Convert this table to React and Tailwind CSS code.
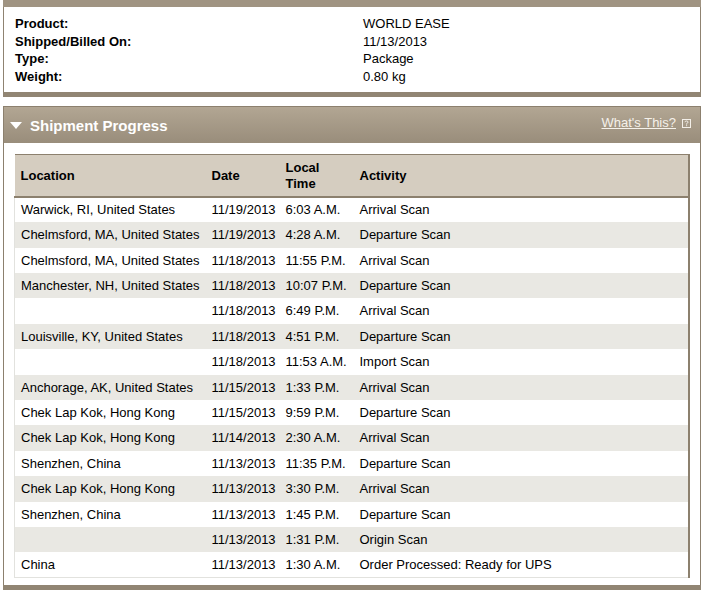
const rows = [
  ["Warwick, RI, United States", "11/19/2013", "6:03 A.M.", "Arrival Scan"],
  ["Chelmsford, MA, United States", "11/19/2013", "4:28 A.M.", "Departure Scan"],
  ["Chelmsford, MA, United States", "11/18/2013", "11:55 P.M.", "Arrival Scan"],
  ["Manchester, NH, United States", "11/18/2013", "10:07 P.M.", "Departure Scan"],
  ["", "11/18/2013", "6:49 P.M.", "Arrival Scan"],
  ["Louisville, KY, United States", "11/18/2013", "4:51 P.M.", "Departure Scan"],
  ["", "11/18/2013", "11:53 A.M.", "Import Scan"],
  ["Anchorage, AK, United States", "11/15/2013", "1:33 P.M.", "Arrival Scan"],
  ["Chek Lap Kok, Hong Kong", "11/15/2013", "9:59 P.M.", "Departure Scan"],
  ["Chek Lap Kok, Hong Kong", "11/14/2013", "2:30 A.M.", "Arrival Scan"],
  ["Shenzhen, China", "11/13/2013", "11:35 P.M.", "Departure Scan"],
  ["Chek Lap Kok, Hong Kong", "11/13/2013", "3:30 P.M.", "Arrival Scan"],
  ["Shenzhen, China", "11/13/2013", "1:45 P.M.", "Departure Scan"],
  ["", "11/13/2013", "1:31 P.M.", "Origin Scan"],
  ["China", "11/13/2013", "1:30 A.M.", "Order Processed: Ready for UPS"],
];

const details = [
  ["Product:", "WORLD EASE"],
  ["Shipped/Billed On:", "11/13/2013"],
  ["Type:", "Package"],
  ["Weight:", "0.80 kg"],
];

function HelpIcon() {
  return (
    <svg width="9" height="9" viewBox="0 0 9 9" className="ml-[6px] mt-[2px]">
      <rect x="0.5" y="0.5" width="8" height="8" fill="none" stroke="#f3efe8" />
      <path d="M3 3.2 Q3 2 4.5 2 Q6 2 6 3.2 Q6 4 4.6 4.6 L4.6 5.6" fill="none" stroke="#f3efe8" strokeWidth="1" />
      <rect x="4.1" y="6.2" width="1" height="1" fill="#f3efe8" />
    </svg>
  );
}

export default function App() {
  return (
    <div className="w-[716px] h-[599px] bg-white font-['Liberation_Sans',Arial,sans-serif] text-[13px] text-black overflow-hidden">
      {/* shipment details */}
      <div className="ml-[3px] w-[698px]">
        <div className="h-[7px] bg-[#a09482]" />
        <div className="border-x border-[#8f8371] pt-[8px] pb-[7px] pl-[11px] bg-white">
          {details.map(([label, value]) => (
            <div key={label} className="flex h-[17.6px] items-center">
              <span className="w-[348px] font-bold">{label}</span>
              <span>{value}</span>
            </div>
          ))}
        </div>
        <div className="h-[5px] bg-[#918573]" />
      </div>

      {/* shipment progress */}
      <div className="ml-[3px] mt-[9px] w-[698px]">
        <div className="h-[37px] border border-b-0 border-[#8c806e] bg-gradient-to-b from-[#b2a693] to-[#998d7b] flex items-center justify-between pl-[6px] pr-[9px]">
          <div className="flex items-center pt-[2px]">
            <svg width="12" height="8" viewBox="0 0 12 8" className="mr-[8px]">
              <polygon points="0,0 12,0 6,7" fill="#ffffff" />
            </svg>
            <span className="text-white font-bold text-[15px]">Shipment Progress</span>
          </div>
          <div className="flex items-center -mt-[6px]">
            <a href="#" className="text-[#f5f1ea] underline">What&apos;s This?</a>
            <HelpIcon />
          </div>
        </div>
        <div className="border-x border-[#8c806e] pt-[11px] pb-[7px] pl-[10px] pr-[10px]">
          <table className="w-[676px] table-fixed border-collapse">
            <colgroup>
              <col className="w-[191px]" />
              <col className="w-[74px]" />
              <col className="w-[74px]" />
              <col />
            </colgroup>
            <thead>
              <tr className="h-[42px] bg-[#d5cdc0] text-left align-middle">
                <th className="border-t border-b-2 border-[#8c806e] pl-[6px] font-bold leading-[16px]">Location</th>
                <th className="border-t border-b-2 border-[#8c806e] pl-[6px] font-bold leading-[16px]">Date</th>
                <th className="border-t border-b-2 border-[#8c806e] pl-[6px] font-bold leading-[16px]">
                  Local
                  <br />
                  Time
                </th>
                <th className="border-t border-r-2 border-b-2 border-[#8c806e] pl-[6px] font-bold leading-[16px]">Activity</th>
              </tr>
            </thead>
            <tbody className="border-l border-b border-[#e2e2de]">
              {rows.map((r, i) => (
                <tr key={i} className={`h-[25.4px] ${i % 2 ? "bg-[#e9e8e3]" : "bg-white"}`}>
                  <td className="pl-[6px] whitespace-nowrap">{r[0]}</td>
                  <td className="pl-[6px] whitespace-nowrap">{r[1]}</td>
                  <td className="pl-[6px] whitespace-nowrap">{r[2]}</td>
                  <td className="pl-[6px] whitespace-nowrap border-r-2 border-[#8c806e]">{r[3]}</td>
                </tr>
              ))}
            </tbody>
          </table>
        </div>
        <div className="h-[5px] bg-[#918573]" />
      </div>
    </div>
  );
}
